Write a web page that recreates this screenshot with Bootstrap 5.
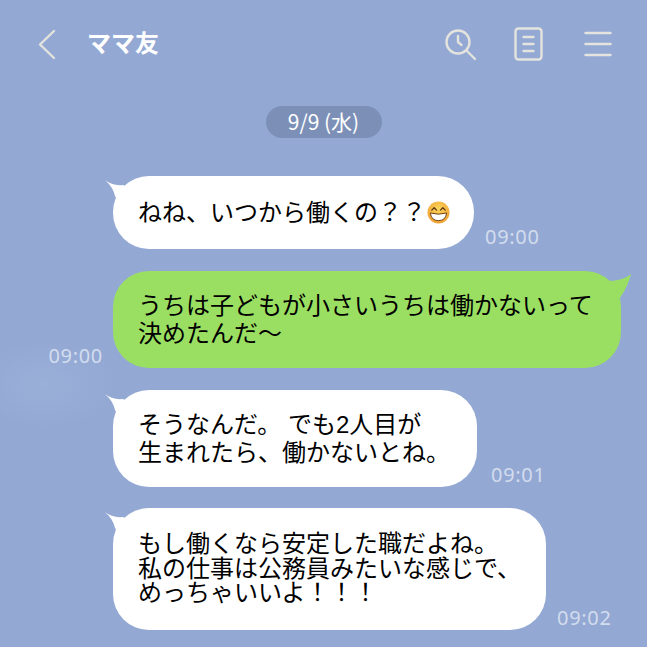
<!DOCTYPE html>
<html lang="ja">

<head>
  <meta charset="UTF-8">
  <meta name="viewport" content="width=device-width, initial-scale=1.0">
  <title>ママ友</title>
  <link href="https://cdn.jsdelivr.net/npm/bootstrap@5.3.0/dist/css/bootstrap.min.css" rel="stylesheet">
  <style>
    html, body { height: 100%; }
    body {
      overflow: hidden;
      font-family: "Liberation Sans", "Noto Sans CJK JP", sans-serif;
      background-color: #93a9d4;
      background-image: radial-gradient(ellipse 70px 45px at 45px 385px, rgba(170, 190, 225, .3), rgba(170, 190, 225, 0));
      color: #000;
    }
    .chat-head { height: 88px; padding-left: 37px; padding-right: 35px; }
    .chat-title { font-size: 24px; font-weight: 700; color: #fff; margin-left: 31px; line-height: 1; }
    .head-icon { display: block; stroke: #e4e3de; fill: none; stroke-width: 2.4; stroke-linecap: round; stroke-linejoin: round; }
    .icon-doc { margin-left: 37px; }
    .icon-menu { margin-left: 41px; }
    .date-pill { font-family: "Noto Sans CJK JP", sans-serif; background: #7c90b7; color: #fff; font-size: 21px; line-height: 31px; height: 32px; width: 116px; margin-top: 18px; margin-bottom: 38px; }
    .msg-row { padding-left: 113px; margin-bottom: 22px; }
    .msg-row-tight { margin-bottom: 21px; }
    .msg-row-out { padding-left: 0; padding-right: 26px; }
    .bubble { position: relative; font-size: 24px; line-height: 28px; white-space: nowrap; padding: 0 0 0 25px; border-radius: 36px; background: #fff; }
    .bubble-out { background: #9bdf62; }
    .h-one { height: 73px; width: 361px; }
    .h-two { height: 97px; width: 508px; }
    .h-two-in { height: 97px; width: 364px; }
    .h-three { height: 122px; width: 433px; line-height: 24.5px; }
    .msg-time { font-family: "Noto Sans", sans-serif; color: rgba(255, 255, 255, .6); font-size: 20px; letter-spacing: .7px; line-height: 1; margin-bottom: 2px; }
    .time-right { margin-left: 11px; }
    .time-right-wide { margin-left: 14px; }
    .time-left { margin-right: 10px; }
    .tail { position: absolute; top: 1px; left: -9px; display: block; }
    .tail-out { left: auto; right: -11px; top: 1px; }
    .emoji-face { display: inline-block; vertical-align: -3px; margin-left: 1px; }
  </style>
</head>

<body>
  <div class="chat-head d-flex align-items-center">
    <svg class="head-icon" width="19" height="31" viewBox="0 0 19 31"><path d="M17 2 L3 15.5 L17 29"/></svg>
    <div class="chat-title">ママ友</div>
    <div class="ms-auto d-flex align-items-center">
      <!-- search in history -->
      <svg class="head-icon" width="33" height="33" viewBox="0 0 33 33"><circle cx="14" cy="14" r="11.5"/><path d="M14 8 V14 L17.5 17"/><path d="M23 23 L31 31"/></svg>
      <svg class="head-icon icon-doc" width="29" height="34" viewBox="0 0 29 34"><rect x="1.5" y="1.5" width="26" height="31" rx="3"/><path d="M9.5 10 H19.5 M9.5 17 H19.5 M9.5 24 H19.5"/></svg>
      <svg class="head-icon icon-menu" width="28" height="26" viewBox="0 0 28 26"><path d="M1.5 2 H26.5 M1.5 13 H26.5 M1.5 24 H26.5"/></svg>
    </div>
  </div>

  <div class="d-flex justify-content-center">
    <div class="date-pill rounded-pill text-center">9/9 (水)</div>
  </div>

  <div class="msg-row d-flex align-items-end">
    <div class="bubble h-one d-flex align-items-center">
      <svg class="tail" width="34" height="26" viewBox="0 0 34 26"><path d="M1 3 Q8 9 19 8 L30 14 L14 24 L11 19 Q9 10 1 3 Z" fill="#fff"/></svg>
      <span>ねね、いつから働くの？？<svg class="emoji-face" width="23" height="23" viewBox="0 0 24 24"><defs><radialGradient id="faceGrad" cx="50%" cy="35%" r="70%"><stop offset="0" stop-color="#fbd75b"/><stop offset="1" stop-color="#ef9a2e"/></radialGradient></defs><circle cx="12" cy="12" r="11.5" fill="url(#faceGrad)"/><path d="M5 9.5 L7.5 7 L10 9.5 M14 9.5 L16.5 7 L19 9.5" fill="none" stroke="#5d3a1a" stroke-width="1.4" stroke-linecap="round" stroke-linejoin="round"/><path d="M3.5 12.5 Q12 15 20.5 12.5 Q19.5 20.5 12 20.5 Q4.5 20.5 3.5 12.5 Z" fill="#fff" stroke="#6b3d15" stroke-width="1"/></svg></span>
    </div>
    <div class="msg-time time-right">09:00</div>
  </div>

  <div class="msg-row msg-row-out d-flex justify-content-end align-items-end">
    <div class="msg-time time-left">09:00</div>
    <div class="bubble bubble-out h-two d-flex align-items-center">
      <svg class="tail tail-out" width="36" height="28" viewBox="0 0 36 28"><path d="M5 9 Q27 10 35 2 Q32 14 24 26 L5 26 Z" fill="#9bdf62"/></svg>
      <span>うちは子どもが小さいうちは働かないって<br>決めたんだ～</span>
    </div>
  </div>

  <div class="msg-row msg-row-tight d-flex align-items-end">
    <div class="bubble h-two-in d-flex align-items-center">
      <svg class="tail" width="34" height="26" viewBox="0 0 34 26"><path d="M1 3 Q8 9 19 8 L30 14 L14 24 L11 19 Q9 10 1 3 Z" fill="#fff"/></svg>
      <span>そうなんだ。 でも2人目が<br>生まれたら、働かないとね。</span>
    </div>
    <div class="msg-time time-right-wide">09:01</div>
  </div>

  <div class="msg-row d-flex align-items-end">
    <div class="bubble h-three d-flex align-items-center">
      <svg class="tail" width="34" height="26" viewBox="0 0 34 26"><path d="M1 3 Q8 9 19 8 L30 14 L14 24 L11 19 Q9 10 1 3 Z" fill="#fff"/></svg>
      <span>もし働くなら安定した職だよね。<br>私の仕事は公務員みたいな感じで、<br>めっちゃいいよ！！！</span>
    </div>
    <div class="msg-time time-right">09:02</div>
  </div>

  <script src="https://cdn.jsdelivr.net/npm/bootstrap@5.3.0/dist/js/bootstrap.bundle.min.js"></script>
</body>

</html>
